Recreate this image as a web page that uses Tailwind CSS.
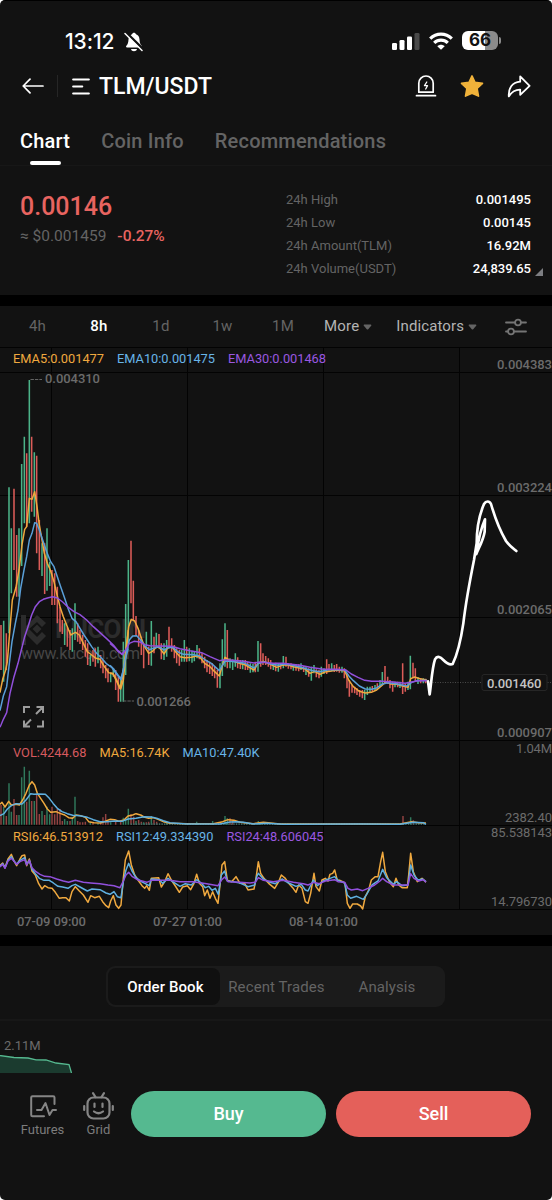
<!DOCTYPE html>
<html lang="en">
<head>
    <meta charset="UTF-8">
    <meta name="viewport" content="width=device-width, initial-scale=1.0">
    <title>TLM/USDT - Chart</title>
    <script src="https://cdn.jsdelivr.net/npm/@tailwindcss/browser@4"></script>
</head>
<body class="bg-white font-['Roboto',sans-serif] antialiased">

<div class="w-[552px] h-[1200px] rounded-[5px] overflow-hidden bg-[#121212] text-white flex flex-col border-t border-black">

    <!-- Status bar -->
    <div class="h-[60px] shrink-0 flex items-start justify-between pl-[65px] pr-[51px] pt-[27px]">
        <div class="flex items-center gap-1.5 pt-px">
            <span class="font-['Inter',sans-serif] font-medium text-[21px] leading-[26px] w-[55px] whitespace-nowrap tracking-[-0.1px]">13:12</span>
            <svg class="w-5 h-[22px] -ml-0.5" viewBox="0 0 20 22" fill="none">
                <path d="M3 16.5c-1 0-1.300-1-.6-1.700C4 13 4.300 11.500 4.500 8.500 4.700 5.500 6.300 3.900 8 3.300 8.400 1.200 11.600 1.200 12 3.300c2 .6 3.400 2.300 3.500 5.200.2 3 .5 4.500 2.100 6.300.7.7.4 1.700-.6 1.700z" fill="#fff"/>
                <path d="M7 18h6c-.4 3-5.600 3-6 0z" fill="#fff"/>
                <path d="M2 1.500l18 17.500" stroke="#121212" stroke-width="2.600"/>
                <path d="M1 2.500l17 17" stroke="#fff" stroke-width="1.500" stroke-linecap="round"/>
            </svg>
        </div>
        <div class="flex items-center gap-[9px] pt-[3px]">
            <svg class="w-7 h-[19px]" viewBox="0 0 28 19" fill="#fff">
                <rect x="0" y="12" width="5" height="7" rx="1.300"/>
                <rect x="7.500" y="9" width="5" height="10" rx="1.300"/>
                <rect x="15" y="5.500" width="5" height="13.500" rx="1.300"/>
                <rect x="22.500" y="2" width="5" height="17" rx="1.300" fill="#4a4a4a"/>
            </svg>
            <svg class="w-6 h-[18px]" viewBox="0 0 24 18" fill="none" stroke="#fff" stroke-width="3.200">
                <path d="M1.200 6.600C7.400.6 16.600.6 22.800 6.600"/>
                <path d="M5.200 10.900c3.900-3.700 9.700-3.700 13.600 0"/>
                <path d="M8.300 14.200c2.200-2 5.200-2 7.400 0L12 17.800z" fill="#fff" stroke="none"/>
            </svg>
            <div class="flex items-center gap-px">
                <div class="w-9 h-[19px] rounded-[6px] text-[#121212] font-['Inter',sans-serif] font-bold text-[17px] leading-[19px] text-center bg-linear-to-r from-white from-65% to-[#8b8b8b] to-65%">66</div>
                <div class="w-[2px] h-[7px] rounded-r-full bg-[#8b8b8b]"></div>
            </div>
        </div>
    </div>

    <!-- Navigation -->
    <div class="h-[50px] shrink-0 flex items-center justify-between pl-[22px] pr-[21px]">
        <div class="flex items-center">
            <svg class="w-[22px] h-4" viewBox="0 0 22 16" fill="none" stroke="#fff" stroke-width="1.700" stroke-linecap="round" stroke-linejoin="round">
                <path d="M21 8H1.500M8 1.200L1.200 8 8 14.800"/>
            </svg>
            <div class="w-px h-[22px] bg-[#262626] ml-[13px]"></div>
            <svg class="w-[18px] h-[17px] ml-[14px]" viewBox="0 0 18 17" fill="none" stroke="#fff" stroke-width="2.200" stroke-linecap="round">
                <path d="M1.200 1.500h15.600M1.200 8.500h9M1.200 15.500h15.600"/>
            </svg>
            <h1 class="font-medium text-[23px] leading-7 ml-[9px] pt-[2px]">TLM/USDT</h1>
        </div>
        <div class="flex items-center">
            <svg class="w-[22px] h-[22px]" viewBox="0 0 22 22" fill="none" stroke="#fff" stroke-width="1.700" stroke-linecap="round" stroke-linejoin="round">
                <path d="M3.800 17.200V8.200a7.200 7.200 0 0 1 14.400 0v9z"/>
                <path d="M1.500 20.700h19"/>
                <path d="M11.800 7l-2.300 3.600h3L10.700 14" stroke-width="1.300"/>
            </svg>
            <svg class="w-6 h-6 ml-[23px]" viewBox="0 0 24 24" fill="#f0b23a" stroke="#f0b23a" stroke-width="1.600" stroke-linejoin="round">
                <path d="M12 1.900l3 6.500 7.500 1-5.400 5 1.400 7.700L12 19.200l-6.500 2.900 1.400-7.700-5.400-5 7.500-1z"/>
            </svg>
            <svg class="w-6 h-[23px] ml-[23px]" viewBox="0 0 24 23" fill="none" stroke="#fff" stroke-width="1.800" stroke-linejoin="round">
                <path d="M13.200 1.400L22.600 10.800 13.200 19.800V14.600C7.500 14.500 4.800 16.800 1.800 21.400 1.200 13.500 5 7.300 13.200 6.700z"/>
            </svg>
        </div>
    </div>

    <!-- Tabs -->
    <div class="h-[55px] shrink-0 flex gap-[31px] pl-[20px] pt-[16px] text-[20px] leading-[29px] font-medium text-[#646464] border-b border-[#171717] tracking-[0.2px]">
        <div class="text-white flex flex-col items-center">
            <span>Chart</span>
            <span class="w-[31px] h-[5px] rounded-full bg-white mt-[5px]"></span>
        </div>
        <span>Coin Info</span>
        <span>Recommendations</span>
    </div>

    <!-- Price summary -->
    <div class="h-[129px] shrink-0 flex justify-between pl-[20px] pr-[9px]">
        <div class="pt-[26px]">
            <div class="text-[25px] leading-[30px] text-[#e86460] font-medium">0.00146</div>
            <div class="flex gap-[11px] text-[15.5px] leading-[22px] mt-[3px]">
                <span class="text-[#646464] whitespace-nowrap">≈ $0.001459</span>
                <span class="text-[#e86460] font-medium">-0.27%</span>
            </div>
        </div>
        <div class="flex items-end h-[116px] pb-[2px]">
            <div class="w-[245px] text-[13px] leading-[23px]">
                <div class="flex justify-between"><span class="text-[#646464]">24h High</span><span class="font-medium">0.001495</span></div>
                <div class="flex justify-between"><span class="text-[#646464]">24h Low</span><span class="font-medium">0.00145</span></div>
                <div class="flex justify-between"><span class="text-[#646464]">24h Amount(TLM)</span><span class="font-medium">16.92M</span></div>
                <div class="flex justify-between"><span class="text-[#646464]">24h Volume(USDT)</span><span class="font-medium">24,839.65</span></div>
            </div>
            <svg class="w-2 h-2 ml-1 mb-[4px]" viewBox="0 0 8 8"><path d="M8 0v8H0z" fill="#7d7e82"/></svg>
        </div>
    </div>
    <div class="h-[11px] shrink-0 bg-black"></div>

    <!-- Timeframes -->
    <div class="h-[41px] shrink-0 flex items-center text-[15px] text-[#646464] tracking-[0.2px] pl-[7px]">
        <span class="w-[61px] text-center">4h</span>
        <span class="w-[62px] text-center text-white font-medium">8h</span>
        <span class="w-[62px] text-center">1d</span>
        <span class="w-[61px] text-center">1w</span>
        <span class="w-[60px] text-center">1M</span>
        <span class="ml-[11px] text-[#b4b4b4]">More</span>
        <svg class="w-[9px] h-[6px] ml-1" viewBox="0 0 9 6"><path d="M1.200.5h6.600q1 .3.400 1.200L5.200 5.200q-.7.6-1.400 0L.8 1.700Q.2.800 1.200.5z" fill="#646464"/></svg>
        <span class="ml-6 text-[#b4b4b4] tracking-[0.1px]">Indicators</span>
        <svg class="w-[9px] h-[6px] ml-1" viewBox="0 0 9 6"><path d="M1.200.5h6.600q1 .3.400 1.200L5.200 5.200q-.7.6-1.400 0L.8 1.700Q.2.800 1.200.5z" fill="#646464"/></svg>
        <svg class="w-[22px] h-[18px] ml-[28px]" viewBox="0 0 22 18" fill="none" stroke="#747474" stroke-width="1.800" stroke-linecap="round">
            <path d="M1 4.500h9M16 4.500h5M1 13.500h2M9 13.500h12"/>
            <circle cx="13" cy="4.500" r="2.900"/>
            <circle cx="6" cy="13.500" r="2.900"/>
        </svg>
    </div>

    <!-- Candles, volume and RSI panes -->
    <svg class="w-[552px] h-[588px] shrink-0" viewBox="0 347 552 588" font-size="13" fill="none">
        <!-- Grid -->
        <path d="M0 347.500H552M0 372.500H552M0 495.500H552M0 617.500H552M0 740.500H552M0 825.500H552M0 909.500H552M51.500 347V909M187.500 347V909M323.500 347V909M459.500 347V909" stroke="#030303"/>

        <!-- Watermark -->
        <g fill="#2c2c2c">
            <path d="M21 615h5v11l11-11 9 8-4 4-5-5-8 7 8 8 5-5 4 4-9 9-11-11v11h-5z"/>
            <path d="M37 624.500l4.500 4.500-4.500 4.500-4.500-4.500z"/>
            <text x="55" y="638" font-size="26" font-weight="700" textLength="91">KUCOIN</text>
            <text x="21" y="659" font-size="16" fill="#464646" textLength="119">www.kucoin.com</text>
        </g>

        <!-- Candles, first part -->
        <g transform="translate(0 340) scale(.33333)" stroke-width="4.600">
            <path stroke="#4bb388" d="M11 842V1025M27 442V880M34 565V760M57 565V770M65 372V678M73 290V550M88 120V550M103 337V530M126 610V708M141 565V752M149 665V738M194 850V915M217 865V935M225 790V900M271 945V978M294 920V970M332 1000V1027M340 985V1010M362 1010V1085M370 905V1085"/>
            <path stroke="#dc5c58" d="M3 855V990M19 880V990M42 446V690M50 585V770M80 340V560M95 290V515M110 347V640M118 540V690M134 610V762M156 690V795M164 700V795M172 740V850M180 800V875M187 840V882M202 860V920M210 870V930M233 850V905M240 870V912M248 885V930M256 900V950M263 910V975M279 930V965M286 925V980M302 945V985M309 960V1000M317 975V1015M324 985V1027M347 990V1050M355 1010V1085"/>
        </g>
        <!-- Candles, second part -->
        <g transform="translate(110 520) scale(.33333)" stroke-width="4.600">
            <path stroke="#4bb388" d="M47 252V465M55 120V370M109 335V380M124 303V437M139 338V385M162 370V420M170 360V410M215 390V425M223 360V425M238 385V424M246 392V428M253 395V424M261 375V415M330 430V505M337 358V468M345 310V440M360 415V445M368 418V450M376 400V440M398 420V448M421 430V458M429 432V457M444 363V455M490 430V450M505 430V455M520 408V445M550 432V452M573 430V450M588 440V465M604 440V482M612 435V460M634 440V470M642 445V462M665 430V454M696 440V458M764 510V540M772 500V525M780 500V518M795 495V512M810 480V500M817 456V492M855 485V502M870 485V504M894 485V510M901 407V508M924 472V492M940 475V490"/>
            <path stroke="#dc5c58" d="M63 62V250M70 182V300M78 288V345M86 330V380M94 350V405M101 370V445M116 380V435M132 350V400M147 342V385M154 370V418M177 320V385M185 355V395M193 375V415M200 385V430M208 390V437M230 380V425M268 385V418M276 400V430M284 410V445M291 420V457M299 425V462M307 430V468M314 440V475M322 450V503M352 330V445M383 412V445M391 420V447M406 420V450M413 425V450M436 425V457M452 370V440M459 400V435M467 408V435M475 415V440M482 420V448M497 428V454M512 430V448M528 410V440M535 430V446M543 430V448M558 433V452M566 433V454M581 438V456M596 445V470M619 448V472M627 450V475M650 418V462M657 432V456M673 435V456M680 432V455M688 440V458M703 445V475M711 460V505M718 480V530M726 495V518M734 500V520M741 505V525M749 510V530M757 510V535M787 498V515M802 490V506M825 438V492M833 470V492M840 480V505M848 485V515M863 485V502M878 430V522M886 490V515M909 428V475M916 445V482M932 474V490M947 476V490"/>
        </g>

        <!-- EMA lines -->
        <g stroke-width="4.500" stroke-linejoin="round">
            <g transform="translate(0 340) scale(.33333)">
                <path stroke="#f0a93f" d="M0 1058L8 1018 17 990 22 965 28 890 37 780 48 742 57 690 66 615 74 568 80 560 88 475 96 478 104 455 111 500 118 555 126 600 133 640 142 670 151 690 162 725 170 760 180 800 190 830 202 860 212 885 220 880 227 877 238 885 250 910 262 935 275 945 288 955 300 958 312 978 326 998 338 1000 348 1020 360 1046 368 1010 375 950 385 870"/>
                <path stroke="#5a9fd8" d="M0 1112L10 1068 20 1040 28 970 36 905 46 850 54 810 62 745 72 690 80 650 88 600 96 580 104 548 110 550 118 570 128 600 140 635 152 665 162 680 172 710 182 740 194 775 204 805 216 835 228 845 240 865 252 885 262 900 275 920 290 940 305 955 320 972 335 982 348 1000 362 1018 370 990 378 950 385 925"/>
                <path stroke="#9150dc" d="M0 1162L10 1138 20 1118 30 1060 42 1010 54 970 64 930 74 890 84 860 95 825 106 800 118 785 130 778 145 773 158 770 172 774 188 786 205 802 222 815 240 824 260 840 280 860 300 878 320 896 340 915 352 930 366 942 375 932 385 920"/>
            </g>
            <g transform="translate(110 520) scale(.33333)">
                <path stroke="#f0a93f" d="M0 460L10 462 20 480 32 507 40 480 48 400 56 320 64 298 74 303 84 325 94 355 104 380 116 400 126 395 140 380 150 385 162 402 172 385 186 380 198 397 210 410 225 413 245 412 258 408 270 412 284 430 300 440 314 455 328 468 336 440 345 412 358 420 372 424 388 430 404 434 418 442 432 450 444 430 460 424 480 432 500 442 516 436 532 434 550 440 568 444 584 446 600 460 614 454 630 463 644 456 660 454 680 450 704 452 716 480 730 500 748 514 766 519 784 517 800 510 815 497 828 485 842 492 860 493 878 498 894 502 902 476 914 471 930 476 950 480"/>
                <path stroke="#5a9fd8" d="M0 436L12 448 24 465 34 478 42 440 50 395 58 360 68 348 80 347 92 360 104 378 118 389 130 385 146 380 162 390 176 382 190 383 204 396 220 403 250 404 270 408 286 420 304 430 318 443 328 452 336 438 345 424 360 424 380 426 405 430 432 444 446 430 464 426 485 433 505 436 520 432 545 435 570 441 590 447 610 452 630 455 655 449 704 449 716 467 730 482 748 498 766 507 785 508 800 504 818 492 834 488 858 491 890 498 904 488 920 482 950 481"/>
                <path stroke="#9150dc" d="M0 370L14 382 25 395 37 404 47 390 58 370 72 364 90 366 104 374 120 377 146 378 186 379 210 386 240 392 275 398 300 410 328 422 340 420 360 420 400 424 432 429 450 426 490 430 520 430 570 436 600 442 640 448 680 448 708 450 724 462 744 472 764 481 785 484 815 484 850 486 885 490 905 486 925 482 950 482"/>
            </g>
        </g>

        <!-- High and low marks -->
        <path d="M30.500 379.500H42M123 701H134" stroke="#646464" stroke-dasharray="3.400 1"/>
        <g fill="#6b6b6b" font-weight="500">
            <text x="45" y="383" textLength="55">0.004310</text>
            <text x="136.500" y="705.500" textLength="54.500">0.001266</text>
        </g>

        <!-- Last price -->
        <path d="M430 682.500H552" stroke="#4a4a4a" stroke-dasharray="1 1.500"/>
        <rect x="482" y="674.500" width="65" height="16" rx="2" fill="#121212" stroke="#262626"/>
        <text x="487" y="687.500" fill="#c4c4c4" font-weight="500" textLength="54.500">0.001460</text>

        <!-- Pen drawing -->
        <path transform="translate(400 340) scale(.33333)" stroke="#fff" stroke-width="8" stroke-linecap="round" stroke-linejoin="round" d="M84 1024L89 1063C94 1030 96 985 105 958C112 945 122 952 130 960C140 970 148 976 158 972C176 935 184 890 190 850C197 790 210 720 222 660L230 610C230 560 240 520 252 492C258 482 268 482 273 492C284 530 296 565 318 603C326 615 338 624 349 633M229 642C238 620 250 600 254 575L255 538C243 565 236 595 230 636"/>

        <!-- Fullscreen button -->
        <path d="M24 713V707H30M43 720.500V726.500H37M36.500 707H43V713M43 707L36 714M30 726.500H24V720.500M24 726.500L31 719.500" stroke="#9c9c9c" stroke-width="2"/>

        <!-- Volume bars -->
        <g transform="translate(0 735) scale(.33333)" stroke-width="4.400">
            <path stroke="#30795c" d="M11 215V269M27 145V269M34 230V269M57 240V269M65 127V269M73 95V269M88 107V269M103 198V269M126 228V269M141 215V269M149 238V269M194 252V269M202 258V269M217 245V269M225 185V269M271 262V269M294 264V269M332 262V269M370 248V269M377 255V269M385 221V269M408 258V269M431 262V269M454 243V269M500 262V269M590 260V269M638 258V269M675 243V269M682 250V269M775 258V269M782 262V269M1232 247V269"/>
            <path stroke="#934342" d="M3 210V269M19 243V269M42 192V269M50 240V269M80 200V269M95 198V269M110 178V269M118 237V269M134 240V269M156 215V269M164 238V269M172 222V269M180 222V269M187 258V269M210 258V269M233 258V269M240 262V269M248 262V269M256 260V269M279 264V269M302 260V269M309 247V269M317 237V269M324 258V269M347 260V269M362 258V269M393 238V269M401 245V269M416 255V269M424 260V269M439 262V269M446 260V269M462 255V269M470 260V269M690 250V269M698 256V269M1209 243V269M1240 256V269"/>
            <path stroke="#3c6660" stroke-width="5" stroke-dasharray="4 3.700" d="M392 267.500H1278"/>
        </g>

        <!-- Volume averages and RSI -->
        <g transform="translate(0 735) scale(.33333)" stroke-width="4.500" stroke-linejoin="round">
            <path stroke="#f0a93f" d="M0 208L6 202 15 216 26 199 34 210 48 208 58 210 68 195 78 175 88 150 96 140 104 150 112 175 122 190 132 205 142 222 152 232 168 230 180 235 194 240 206 248 218 250 228 240 242 242 256 247 266 260 282 263 302 264 318 258 330 253 344 254 358 259 372 255 384 243 398 240 408 236 422 240 432 246 446 250 460 248 474 253 490 260 510 265 560 266 640 266 668 260 684 254 702 256 720 262 760 266 790 262 840 267 1200 267 1235 260 1255 263 1278 264"/>
            <path stroke="#5fb0e0" d="M0 242L12 236 22 222 34 212 48 206 66 207 78 195 92 176 102 178 116 177 136 178 148 190 160 206 172 220 186 230 202 236 218 241 240 242 262 247 280 254 300 260 320 260 344 258 366 259 384 252 408 250 432 245 454 246 470 250 490 257 510 263 560 267 660 267 690 261 710 260 730 262 760 267 800 265 850 268 1080 267 1200 268 1240 262 1270 263 1278 268"/>

            <path stroke="#f0a93f" d="M0 392L8 384 15 398 24 372 34 358 42 378 50 392 60 372 66 362 74 360 80 392 88 372 96 408 106 420 116 446 126 462 134 452 144 458 156 460 166 472 178 490 188 488 198 488 208 498 216 470 226 455 238 468 250 480 264 502 272 482 284 488 298 484 308 500 318 512 326 518 332 498 340 482 348 510 356 520 363 510 370 430 376 375 386 348 394 390 404 420 416 438 426 452 434 460 440 452 448 466 454 430 476 428 484 456 494 440 504 416 514 435 528 456 538 472 548 456 562 452 572 464 582 445 590 418 598 445 608 455 614 482 622 465 630 490 638 470 646 490 654 505 660 450 666 390 674 380 682 436 695 440 708 425 720 445 734 445 744 465 762 462 768 430 775 380 782 415 792 430 806 445 824 460 836 440 844 420 856 430 866 445 878 458 888 472 896 450 906 460 916 500 924 505 932 475 942 415 948 455 958 468 966 435 976 430 984 438 990 418 998 415 1004 405 1012 436 1020 436 1028 440 1035 445 1042 505 1050 520 1058 507 1072 507 1082 513 1088 522 1096 485 1106 465 1114 435 1126 425 1134 425 1142 380 1148 352 1156 410 1168 440 1180 455 1188 430 1196 450 1206 458 1222 458 1226 420 1232 355 1240 410 1252 440 1266 430 1278 442"/>
            <path stroke="#5fb0e0" d="M0 394L8 386 15 398 24 376 34 365 42 378 50 388 60 376 74 368 80 388 88 376 96 402 106 416 118 430 132 436 148 436 160 444 174 454 188 456 204 460 216 452 226 448 240 456 262 468 276 462 300 464 318 474 330 478 342 470 352 485 363 488 370 440 378 405 386 385 396 408 408 428 424 440 436 446 448 452 454 432 478 434 488 445 504 430 518 440 540 454 556 446 574 450 590 434 606 446 616 458 626 454 636 466 646 460 655 478 664 420 674 408 682 438 700 440 720 444 744 455 764 450 770 425 775 415 790 432 810 442 826 446 846 432 866 444 888 454 904 448 916 465 924 468 940 435 952 452 970 438 990 430 1004 425 1014 436 1034 444 1042 480 1052 490 1070 484 1090 493 1100 478 1116 450 1134 438 1148 403 1160 428 1180 448 1190 440 1206 452 1224 450 1232 390 1242 420 1254 435 1268 432 1278 440"/>
            <path stroke="#9150dc" d="M0 396L8 388 15 400 24 378 34 370 50 388 60 380 74 374 80 390 88 376 96 398 108 410 120 418 134 424 150 425 170 432 190 438 206 442 226 436 250 442 272 444 300 446 324 450 342 452 360 458 370 438 378 420 386 412 396 424 412 434 440 442 454 436 480 436 510 436 540 440 580 440 620 446 654 452 664 436 674 426 684 440 720 442 750 444 766 442 775 428 790 436 820 440 850 436 880 442 910 446 924 450 942 442 958 446 976 438 1004 434 1014 440 1034 442 1044 460 1054 465 1072 462 1088 467 1104 460 1124 450 1140 438 1148 430 1160 440 1180 450 1206 450 1224 450 1232 416 1242 430 1256 438 1270 434 1278 442"/>
        </g>

        <!-- Legends -->
        <g font-size="12.800">
            <text x="13" y="362.500" fill="#f0a93f" textLength="91">EMA5:0.001477</text>
            <text x="117" y="362.500" fill="#68b5e8" textLength="98">EMA10:0.001475</text>
            <text x="228" y="362.500" fill="#9a58e0" textLength="98">EMA30:0.001468</text>
            <text x="13" y="756.500" fill="#d65a5f" textLength="73.500">VOL:4244.68</text>
            <text x="99.500" y="756.500" fill="#f0a93f" textLength="70">MA5:16.74K</text>
            <text x="182.500" y="756.500" fill="#68b5e8" textLength="77">MA10:47.40K</text>
            <text x="13" y="840.500" fill="#f0a93f" textLength="90">RSI6:46.513912</text>
            <text x="116" y="840.500" fill="#68b5e8" textLength="97.500">RSI12:49.334390</text>
            <text x="226.500" y="840.500" fill="#9a58e0" textLength="97">RSI24:48.606045</text>
        </g>

        <!-- Axis labels -->
        <g fill="#6b6b6b">
            <text x="497" y="369" font-weight="500" textLength="55">0.004383</text>
            <text x="497" y="492" font-weight="500" textLength="55">0.003224</text>
            <text x="497" y="614" font-weight="500" textLength="55">0.002065</text>
            <text x="497" y="737" font-weight="500" textLength="55">0.000907</text>
            <text x="516" y="753" textLength="36">1.04M</text>
            <text x="505" y="822" textLength="47">2382.40</text>
            <text x="491" y="837" textLength="61">85.538143</text>
            <text x="491" y="906" textLength="61">14.796730</text>
            <text x="17" y="926" font-weight="500" textLength="69">07-09 09:00</text>
            <text x="153" y="926" font-weight="500" textLength="69">07-27 01:00</text>
            <text x="289" y="926" font-weight="500" textLength="69">08-14 01:00</text>
        </g>
    </svg>
    <div class="h-[11px] shrink-0 bg-black"></div>

    <!-- Order book tabs -->
    <div class="h-[75px] shrink-0 flex pl-[106px] items-start pt-[20px] border-b-2 border-[#171717]">
        <div class="w-[339px] h-[41px] rounded-[9px] bg-[#1b1b1b] flex items-center text-center text-[15px] text-[#646464] p-[2px] tracking-[0.1px]">
            <span class="w-[112px] h-[37px] leading-[38px] pl-[3px] rounded-[8px] bg-[#101010] text-white font-medium">Order Book</span>
            <span class="w-[113px] leading-[38px] whitespace-nowrap">Recent Trades</span>
            <span class="w-[108px] leading-[38px]">Analysis</span>
        </div>
    </div>

    <!-- Depth preview -->
    <div class="h-[53px] shrink-0 pt-[17px]">
        <div class="pl-1 text-[13px] leading-4 text-[#6b6b6b]">2.11M</div>
        <svg class="w-[74px] h-[18px] mt-px" viewBox="0 0 74 18" fill="none">
            <path d="M0 0.500L14 2.500 28 3 36 4.800 46 5 56 8 69 9.500 71.500 18H0z" fill="#1b3b2f"/>
            <path d="M0 0.500L14 2.500 28 3 36 4.800 46 5 56 8 69 9.500 71.500 18" stroke="#55b88f" stroke-width="1.300"/>
        </svg>
    </div>

    <!-- Bottom actions -->
    <div class="flex items-start pt-[17px] pl-[20px] text-[#7c7c7c] text-[13px] leading-4">
        <div class="w-[45px] flex flex-col items-center gap-[4px] pt-[4px]">
            <svg class="w-[27px] h-[23px] ml-0.5" viewBox="0 0 27 23" fill="none" stroke="#858585" stroke-width="2" stroke-linecap="round" stroke-linejoin="round">
                <path d="M24.500 9V2.500Q24.500 1.200 23.200 1.200H2.500Q1.200 1.200 1.200 2.500V20Q1.200 21.300 2.500 21.300H14"/>
                <path d="M7 15H11.500L15.500 8 19.500 20 22.500 15H26"/>
            </svg>
            <span>Futures</span>
        </div>
        <div class="w-[35px] ml-[16px] flex flex-col items-center gap-[2px]">
            <svg class="w-[31px] h-[29px]" viewBox="0 0 31 29" fill="none" stroke="#858585" stroke-width="2.200" stroke-linecap="round">
                <rect x="4.500" y="6.500" width="22" height="21" rx="6"/>
                <path d="M10 2.200L12.500 6M21 2.200L18.500 6M1.200 15v4M29.800 15v4M11.500 12.500v3.500M19.500 12.500v3.500M11 20.500q4.500 3.500 9 0"/>
            </svg>
            <span>Grid</span>
        </div>
        <div class="flex gap-[10px] ml-[15px] text-white text-[18px] leading-[46px] font-medium text-center">
            <div class="w-[195px] h-[46px] rounded-full bg-[#55b990]">Buy</div>
            <div class="w-[195px] h-[46px] rounded-full bg-[#e4605a]">Sell</div>
        </div>
    </div>
</div>

</body>
</html>
